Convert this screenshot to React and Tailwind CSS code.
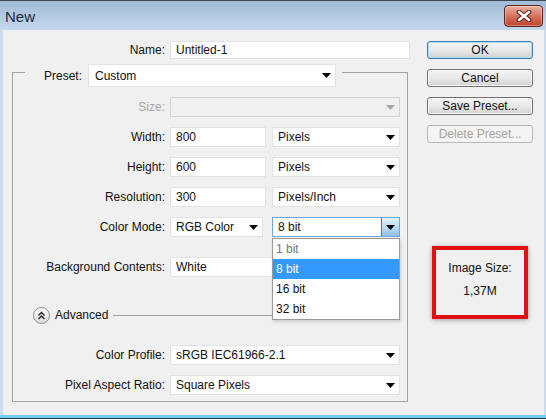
import React from "react";

// small black triangle used by every combo box
function Caret({ color = "#000" }) {
  return (
    <svg width="9" height="5" viewBox="0 0 9 5" className="shrink-0">
      <path d="M0 0h9L4.5 5z" fill={color} />
    </svg>
  );
}

function Select({ value, className = "", disabled }) {
  return (
    <div
      className={`flex items-center h-[20px] border pl-[5px] pr-[4px] ${
        disabled ? "bg-[#f0f0f0] border-[#d4d4d4]" : "bg-white border-[#e3e3e3]"
      } ${className}`}
    >
      <span className="flex-1 truncate">{value}</span>
      <Caret color={disabled ? "#a8a8a8" : "#000"} />
    </div>
  );
}

function Input({ value, className = "" }) {
  return (
    <div className={`flex items-center h-[20px] bg-white border border-[#e3e3e3] pl-[5px] ${className}`}>
      {value}
    </div>
  );
}

function Row({ label, muted, className = "", children }) {
  return (
    <div className={`flex items-center gap-[5px] h-[20px] ${className}`}>
      <span className={`w-[152px] text-right ${muted ? "text-[#a6a6a6]" : ""}`}>{label}</span>
      {children}
    </div>
  );
}

function CloseButton() {
  return (
    <div className="ml-auto mt-[4px] w-[39px] h-[22px] rounded-[4px] border border-[#5f2219] bg-gradient-to-b from-[#eab1a4] via-[#d6735f] to-[#c0432b] shadow-[inset_0_0_0_1px_rgba(255,255,255,0.35)] flex items-center justify-center">
      <svg width="16" height="12" viewBox="0 0 16 12">
        <path d="M3 2l10 8M13 2L3 10" stroke="#5a2118" strokeWidth="4.8" strokeLinecap="round" />
        <path d="M3 2l10 8M13 2L3 10" stroke="#fff" strokeWidth="2.8" strokeLinecap="round" />
      </svg>
    </div>
  );
}

function Button({ children, primary, disabled }) {
  if (disabled) {
    return (
      <div className="w-[106px] h-[18px] rounded-[3px] border border-[#b5b9bc] bg-[#f4f4f4] text-[#a3a3a3] flex items-center justify-center leading-none">
        {children}
      </div>
    );
  }
  return (
    <div
      className={`w-[106px] h-[18px] rounded-[3px] border bg-gradient-to-b from-[#f4f4f4] via-[#e9e9e9] to-[#d2d2d2] flex items-center justify-center leading-none ${
        primary
          ? "border-[#3c7fb1] shadow-[inset_0_0_0_1px_#a9dcf6]"
          : "border-[#707070] shadow-[inset_0_0_0_1px_#fbfbfb]"
      }`}
    >
      {children}
    </div>
  );
}

export default function App() {
  return (
    <div className="w-[546px] h-[419px] flex flex-col overflow-hidden font-['Liberation_Sans',Arial,sans-serif] text-[12px] text-[#111]">
      {/* caption bar */}
      <div className="h-[30px] shrink-0 flex items-start border-t border-[#3b4753] bg-gradient-to-b from-[#a2bbd6] to-[#c4d9ee] pl-[5px] pr-[3px]">
        <span className="mt-[7px] text-[15px] leading-[18px] text-[#1b2a3b]">New</span>
        <CloseButton />
      </div>

      <div className="flex-1 flex bg-[#cbdcee] pl-[3px] pr-[2px]">
        <div className="flex-1 flex bg-[#f0f0f0]">
          {/* form */}
          <div className="w-[424px] pt-[11px]">
            <div className="flex items-center gap-[5px] h-[18px]">
              <span className="w-[162px] text-right">Name:</span>
              <div className="w-[240px] h-[18px] flex items-center bg-white border border-[#e3e3e3] pl-[5px]">
                Untitled-1
              </div>
            </div>

            <div className="ml-[9px] mt-[13px] w-[396px] h-[330px] border border-[#a3a3a3] flex flex-col">
              <div className="-mt-[9px] ml-[12px] w-fit h-[23px] flex items-center gap-[5px] bg-[#f0f0f0] pl-[19px] pr-[6px]">
                <span className="w-[39px]">Preset:</span>
                <Select value="Custom" className="w-[248px] !h-[23px] pl-[6px]" />
              </div>

              <div className="pt-[10px] flex flex-col">
                <Row label="Size:" muted>
                  <Select value="" disabled className="w-[230px]" />
                </Row>
                <Row label="Width:" className="mt-[10px]">
                  <Input value="800" className="w-[96px]" />
                  <Select value="Pixels" className="ml-[1px] w-[128px]" />
                </Row>
                <Row label="Height:" className="mt-[10px]">
                  <Input value="600" className="w-[96px]" />
                  <Select value="Pixels" className="ml-[1px] w-[128px]" />
                </Row>
                <Row label="Resolution:" className="mt-[10px]">
                  <Input value="300" className="w-[96px]" />
                  <Select value="Pixels/Inch" className="ml-[1px] w-[128px]" />
                </Row>
                <Row label="Color Mode:" className="mt-[10px]">
                  <Select value="RGB Color" className="w-[93px]" />
                  <div className="relative ml-[4px] w-[128px] z-10">
                    <div className="flex items-center h-[20px] bg-white border border-[#6fa6dc] pl-[5px]">
                      <span className="flex-1">8 bit</span>
                      <div className="w-[18px] h-full border-l border-[#3c7fb1] bg-gradient-to-b from-[#e3f2fc] via-[#bcdcf5] to-[#8fc0e9] flex items-center justify-center">
                        <Caret />
                      </div>
                    </div>
                    {/* open list */}
                    <div className="absolute left-0 top-[21px] w-[128px] bg-white border border-[#9a9a9a] shadow-[1px_2px_3px_rgba(0,0,0,0.15)]">
                      <div className="h-[20px] flex items-center pl-[3px] text-[#777]">1 bit</div>
                      <div className="h-[20px] flex items-center pl-[3px] bg-[#3399ff] text-white">8 bit</div>
                      <div className="h-[20px] flex items-center pl-[3px]">16 bit</div>
                      <div className="h-[20px] flex items-center pl-[3px]">32 bit</div>
                    </div>
                  </div>
                </Row>
                <Row label="Background Contents:" className="mt-[20px]">
                  <Select value="White" className="w-[230px]" />
                </Row>

                <div className="flex items-center h-[18px] mt-[29px] pl-[20px]">
                  <div className="w-[17px] h-[17px] rounded-full border border-[#8c8c8c] bg-gradient-to-b from-white to-[#dcdcdc] flex items-center justify-center">
                    <svg width="9" height="9" viewBox="0 0 9 9">
                      <path d="M1.5 4.5L4.5 1.5 7.5 4.5M1.5 8L4.5 5 7.5 8" fill="none" stroke="#222" strokeWidth="1.4" />
                    </svg>
                  </div>
                  <span className="ml-[5px]">Advanced</span>
                  <div className="ml-[5px] w-[287px] h-px bg-[#a3a3a3]" />
                </div>

                <Row label="Color Profile:" className="mt-[21px]">
                  <Select value="sRGB IEC61966-2.1" className="w-[230px]" />
                </Row>
                <Row label="Pixel Aspect Ratio:" className="mt-[10px]">
                  <Select value="Square Pixels" className="w-[230px]" />
                </Row>
              </div>
            </div>
          </div>

          {/* buttons + image size */}
          <div className="w-[106px] pt-[11px] flex flex-col gap-[10px]">
            <Button primary>OK</Button>
            <Button>Cancel</Button>
            <Button>Save Preset...</Button>
            <Button disabled>Delete Preset...</Button>
            <div className="mt-[93px] mx-[5px] h-[73px] border-4 border-[#e20f0f] shadow-[0_1px_5px_rgba(0,0,0,0.35)] flex flex-col items-center pt-[11px] gap-[8px] leading-[15px]">
              <span>Image Size:</span>
              <span>1,37M</span>
            </div>
          </div>
        </div>
      </div>

      <div className="h-[3px] shrink-0 bg-[#73cfe8]" />
      <div className="h-px shrink-0 bg-[#2b3b47]" />
    </div>
  );
}
